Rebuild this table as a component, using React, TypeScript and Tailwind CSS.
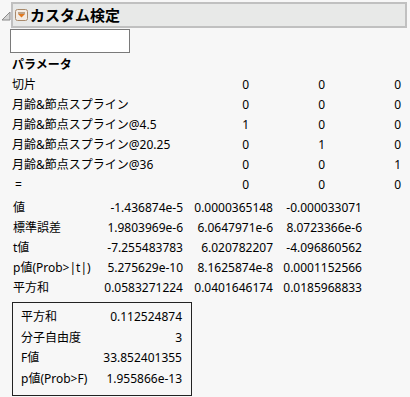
import React from "react";

const font = { fontFamily: '"Noto Sans", "Noto Sans CJK JP", sans-serif' };

const params: [string, string, string, string][] = [
  ["切片", "0", "0", "0"],
  ["月齢&節点スプライン", "0", "0", "0"],
  ["月齢&節点スプライン@4.5", "1", "0", "0"],
  ["月齢&節点スプライン@20.25", "0", "1", "0"],
  ["月齢&節点スプライン@36", "0", "0", "1"],
  [" =", "0", "0", "0"],
];

const stats: [string, string, string, string][] = [
  ["値", "-1.436874e-5", "0.0000365148", "-0.000033071"],
  ["標準誤差", "1.9803969e-6", "6.0647971e-6", "8.0723366e-6"],
  ["t値", "-7.255483783", "6.020782207", "-4.096860562"],
  ["p値(Prob>|t|)", "5.275629e-10", "8.1625874e-8", "0.0001152566"],
  ["平方和", "0.0583271224", "0.0401646174", "0.0185968833"],
];

const summary: [string, string][] = [
  ["平方和", "0.112524874"],
  ["分子自由度", "3"],
  ["F値", "33.852401355"],
  ["p値(Prob>F)", "1.955866e-13"],
];

function DisclosureTriangle() {
  return (
    <svg width="10" height="10" viewBox="0 0 10 10" className="shrink-0">
      <polygon points="9,1 9,9 1,9" fill="#d4d4d4" stroke="#8a8a8a" strokeWidth="1" />
    </svg>
  );
}

function MenuButton() {
  return (
    <svg width="13" height="12" viewBox="0 0 13 12" className="shrink-0">
      <rect x="0.5" y="0.5" width="12" height="11" rx="2" fill="#f3ece4" stroke="#a88a6c" />
      <line x1="3" y1="4" x2="10" y2="4" stroke="#8a5a2a" strokeWidth="1" />
      <polygon points="3,5 10,5 6.5,8.5" fill="#e0781e" />
    </svg>
  );
}

export default function App() {
  return (
    <div className="w-[410px] h-[397px] bg-[#f7f7f7] text-[12px] text-black overflow-hidden" style={font}>
      <div className="flex items-center pt-[2px] pl-[1px]">
        <div className="w-[10px] mt-[2px] flex">
          <DisclosureTriangle />
        </div>
        <div className="flex items-center h-[26px] w-[396px] bg-[#e8e9e8] border-2 border-[#c0c0c0] pl-[2px] gap-[2px]">
          <MenuButton />
          <span className="text-[15px] font-bold leading-none">カスタム検定</span>
        </div>
      </div>

      <div className="ml-[10px] mt-[1px] w-[120px] h-[24px] bg-white border border-[#7a7a7a]" />

      <div className="pl-[12px] mt-[2px] font-bold h-[20px] leading-[20px]">パラメータ</div>

      <div className="grid grid-cols-[162px_76px_76px_76px] pl-[12px]">
        {params.map((r, i) => (
          <React.Fragment key={i}>
            <div className="h-[20px] leading-[20px] whitespace-pre">{r[0]}</div>
            <div className="h-[20px] leading-[20px] text-right pr-[1px]">{r[1]}</div>
            <div className="h-[20px] leading-[20px] text-right pr-[1px]">{r[2]}</div>
            <div className="h-[20px] leading-[20px] text-right pr-[1px]">{r[3]}</div>
          </React.Fragment>
        ))}
      </div>

      <div className="grid grid-cols-[80px_90px_90px_89px] pl-[13px] mt-[3px]">
        {stats.map((r, i) => (
          <React.Fragment key={i}>
            <div className="h-[20px] leading-[20px] whitespace-nowrap">{r[0]}</div>
            <div className="h-[20px] leading-[20px] text-right">{r[1]}</div>
            <div className="h-[20px] leading-[20px] text-right">{r[2]}</div>
            <div className="h-[20px] leading-[20px] text-right">{r[3]}</div>
          </React.Fragment>
        ))}
      </div>

      <div className="ml-[12px] mt-[4px] w-[180px] border border-[#222] pt-[4px] pb-[6px] pl-[8px] pr-[9px]">
        {summary.map((r, i) => (
          <div key={i} className="flex justify-between h-[20.5px] leading-[20.5px]">
            <span>{r[0]}</span>
            <span>{r[1]}</span>
          </div>
        ))}
      </div>
    </div>
  );
}
